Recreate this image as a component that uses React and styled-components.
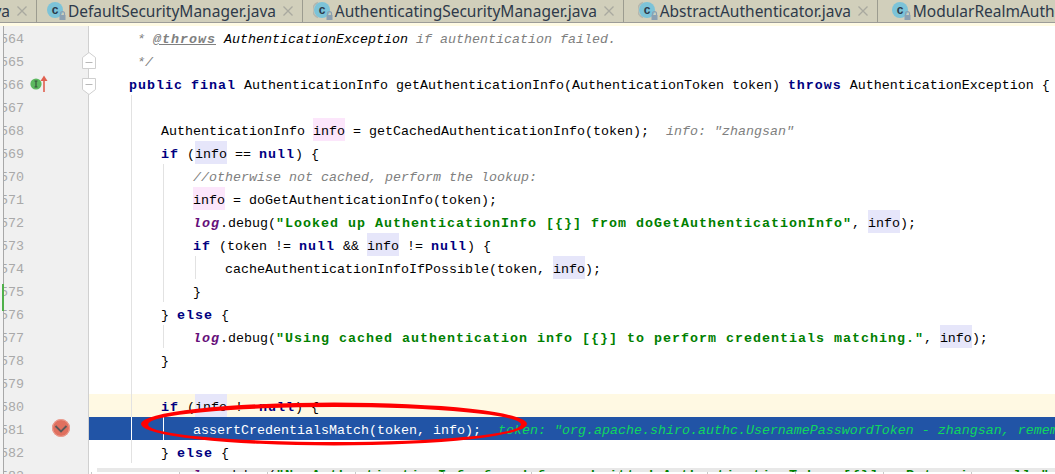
import React from 'react';
import styled, { createGlobalStyle } from 'styled-components';

const GlobalStyle = createGlobalStyle`
  html, body {
    margin: 0;
    padding: 0;
    background: #fff;
  }
  body {
    width: 1055px;
    height: 474px;
    overflow: hidden;
  }
`;

const Page = styled.div`
  position: relative;
  width: 1055px;
  height: 474px;
  overflow: hidden;
`;

/* tabs */
const TabBar = styled.div`
  display: flex;
  height: 22px;
  background: #d1cfbb;
  border-bottom: 1px solid #9c9c98;
  overflow: hidden;
`;

const Tab = styled.div`
  display: flex;
  flex-shrink: 0;
  align-items: center;
  justify-content: flex-end;
  box-sizing: border-box;
  width: ${p => p.$width}px;
  padding-right: 8px;
  border-right: 1px solid #9c9c90;
  overflow: hidden;
`;

const TabName = styled.span`
  flex-shrink: 0;
  margin: 0 6px 0 2px;
  font: 15.5px 'Noto Sans', sans-serif;
  color: #2e3a4a;
  white-space: nowrap;
`;

const NoticeStrip = styled.div`
  height: 3px;
  background: #fffbe4;
`;

/* editor body */
const Body = styled.div`
  display: grid;
  grid-template-columns: 89px 1fr;
  height: 448px;
  overflow: hidden;
  font: 13.34px/27px 'Liberation Mono', monospace;
`;

const Gutter = styled.div`
  position: relative;
  background: #f0f0f0;
  border-right: 1px solid #d0d0d0;
  box-sizing: border-box;

  &::before {
    content: '';
    position: absolute;
    z-index: 2;
    left: 0;
    top: 0;
    bottom: 0;
    width: 3px;
    background: #f4f4f4;
    border-right: 1px solid #a8a8a8;
  }
`;

const ChangeMark = styled.div`
  position: absolute;
  z-index: 3;
  left: 2px;
  top: 258px;
  width: 2px;
  height: 27px;
  background: #4fb04a;
`;

const LineNo = styled.div`
  position: relative;
  height: 23px;
  color: #a9a9a9;
`;

const GutterIcon = styled.svg`
  position: absolute;
  left: ${p => p.$left}px;
  top: ${p => p.$top}px;
`;

const FoldMark = styled.svg`
  position: absolute;
  z-index: 3;
  left: 82px;
  top: ${p => p.$top}px;
`;

const Editor = styled.div`
  display: flex;
  flex-direction: column;
  min-width: 0;
  overflow: hidden;
`;

const Row = styled.div`
  position: relative;
  flex-shrink: 0;
  height: 23px;
  padding-left: ${p => 8 + p.$indent * 8}px;
  white-space: pre;
  color: ${p => (p.$selected ? '#fff' : '#000')};
  background: ${p => (p.$selected ? '#2154a6' : p.$caret ? '#fff9e3' : 'transparent')};
`;

const Guide = styled.i`
  position: absolute;
  left: ${p => 10 + p.$level * 8}px;
  top: 0;
  bottom: 0;
  width: 1px;
  background: ${p => (p.$selected ? '#fff' : '#e2e2e2')};
`;

const Keyword = styled.b`
  color: #000080;
  letter-spacing: 1px;
`;

const Str = styled.b`
  color: #008000;
  letter-spacing: 1px;
`;

const Comment = styled.i`
  color: #808080;
`;

const DocTag = styled.b`
  font-style: italic;
  color: #808080;
  letter-spacing: 1px;
  text-decoration: underline;
`;

const DocName = styled.i`
  color: #000;
`;

const LogField = styled.b`
  font-style: italic;
  color: #660e7a;
  letter-spacing: 1px;
`;

const Usage = styled.span`
  display: inline-block;
  height: 23px;
  background: ${p => (p.$write ? '#fce6fb' : '#e6e6fa')};
`;

const Hint = styled.i`
  margin-left: 17px;
  color: ${p => (p.$selected ? '#0fd65f' : '#808080')};
`;

/* line 583 is cut by the strip of a following capture */
const CutRow = styled.div`
  flex-shrink: 0;
  height: 4px;
  margin: 5px 0 0 8px;
  padding-left: 96px;
  background: #e8e8e8;
  white-space: pre;
  overflow: hidden;
  line-height: 16px;
`;

const TickRuler = styled.div`
  flex-shrink: 0;
  height: 2px;
  background: repeating-linear-gradient(to right, #c8c8c8 0 1px, #fff 1px 88px);
  background-position: 2px 0;
`;

const CircleMark = styled.svg`
  position: absolute;
  z-index: 5;
  left: 0;
  top: 0;
  pointer-events: none;
`;

const ClassIcon = ({ ring }) => (
  <svg width="20" height="20" viewBox="0 0 20 20" style={{ flexShrink: 0 }}>
    {ring && <path d="M5 1.5A8 8 0 0 0 5 16.5" fill="none" stroke="#b4b6ae" strokeWidth="1.5" />}
    <circle cx="9" cy="9" r="8" fill="#7cc3d8" />
    <text x="9" y="13" textAnchor="middle" fontFamily="'Liberation Sans', sans-serif" fontSize="12" fontWeight="700" fill="#2b3a4c">c</text>
    <path d="M14.5 14v-1.4a2 2 0 0 1 4 0V14" fill="none" stroke="#8ba0b2" strokeWidth="1.2" />
    <rect x="13.5" y="14" width="6" height="5" fill="#8ba0b2" />
  </svg>
);

const CloseIcon = () => (
  <svg width="12" height="12" viewBox="0 0 12 12" style={{ flexShrink: 0 }}>
    <path d="M1.5 1.5l9 9M10.5 1.5l-9 9" stroke="#a9a99f" strokeWidth="1.3" />
  </svg>
);

const tabs = [
  { name: 'java', width: 37 },
  { name: 'DefaultSecurityManager.java', width: 266 },
  { name: 'AuthenticatingSecurityManager.java', width: 321, ring: true },
  { name: 'AbstractAuthenticator.java', width: 254, ring: true },
  { name: 'ModularRealmAuthenticator.java', width: 300 }
];

const lines = [
  { no: 564, indent: 5, body: <><Comment>* </Comment><DocTag>@throws</DocTag><DocName> AuthenticationException</DocName><Comment> if authentication failed.</Comment></> },
  { no: 565, indent: 5, body: <Comment>*/</Comment> },
  { no: 566, indent: 4, body: <><Keyword>public</Keyword> <Keyword>final</Keyword> AuthenticationInfo getAuthenticationInfo(AuthenticationToken token) <Keyword>throws</Keyword> AuthenticationException {'{'}</> },
  { no: 567, guides: [4] },
  { no: 568, indent: 8, guides: [4], body: <>AuthenticationInfo <Usage $write>info</Usage> = getCachedAuthenticationInfo(token);<Hint>info: "zhangsan"</Hint></> },
  { no: 569, indent: 8, guides: [4], body: <><Keyword>if</Keyword> (<Usage>info</Usage> == <Keyword>null</Keyword>) {'{'}</> },
  { no: 570, indent: 12, guides: [4, 8], body: <Comment>//otherwise not cached, perform the lookup:</Comment> },
  { no: 571, indent: 12, guides: [4, 8], body: <><Usage $write>info</Usage> = doGetAuthenticationInfo(token);</> },
  { no: 572, indent: 12, guides: [4, 8], body: <><LogField>log</LogField>.debug(<Str>"Looked up AuthenticationInfo [{'{}'}] from doGetAuthenticationInfo"</Str>, <Usage>info</Usage>);</> },
  { no: 573, indent: 12, guides: [4, 8], body: <><Keyword>if</Keyword> (token != <Keyword>null</Keyword> &amp;&amp; <Usage>info</Usage> != <Keyword>null</Keyword>) {'{'}</> },
  { no: 574, indent: 16, guides: [4, 8, 12], body: <>cacheAuthenticationInfoIfPossible(token, <Usage>info</Usage>);</> },
  { no: 575, indent: 12, guides: [4, 8], body: '}' },
  { no: 576, indent: 8, guides: [4], body: <>{'} '}<Keyword>else</Keyword> {'{'}</> },
  { no: 577, indent: 12, guides: [4, 8], body: <><LogField>log</LogField>.debug(<Str>"Using cached authentication info [{'{}'}] to perform credentials matching."</Str>, <Usage>info</Usage>);</> },
  { no: 578, indent: 8, guides: [4], body: '}' },
  { no: 579, guides: [4] },
  { no: 580, indent: 8, guides: [4], caret: true, body: <><Keyword>if</Keyword> (<Usage>info</Usage> != <Keyword>null</Keyword>) {'{'}</> },
  { no: 581, indent: 12, guides: [4, 8], selected: true, body: <>assertCredentialsMatch(token, info);<Hint $selected>token: "org.apache.shiro.authc.UsernamePasswordToken - zhangsan, rememberMe=false"</Hint></> },
  { no: 582, indent: 8, guides: [4], body: <>{'} '}<Keyword>else</Keyword> {'{'}</> }
];

const App = () => (
  <Page>
    <GlobalStyle />
    <TabBar>
      {tabs.map((tab, i) => (
        <Tab key={tab.name} $width={tab.width}>
          {i > 0 && <ClassIcon ring={tab.ring} />}
          <TabName>{tab.name}</TabName>
          <CloseIcon />
        </Tab>
      ))}
    </TabBar>
    <NoticeStrip />
    <Body>
      <Gutter>
        {lines.map(line => <LineNo key={line.no}>{line.no}</LineNo>)}
        <LineNo>583</LineNo>
        <ChangeMark />
        <FoldMark $top={26} width="14" height="17" viewBox="0 0 14 17">
          <path d="M7 .5L13.5 5.5V16.5H.5V5.5Z" fill="#fff" stroke="#cfcfcf" />
          <path d="M3.5 10.5h7" stroke="#b8b8b8" />
        </FoldMark>
        <FoldMark $top={52} width="14" height="17" viewBox="0 0 14 17">
          <path d="M.5.5H13.5V11.5L7 16.5L.5 11.5Z" fill="#fff" stroke="#cfcfcf" />
          <path d="M3.5 6.5h7" stroke="#b8b8b8" />
        </FoldMark>
        <GutterIcon $left={29} $top={48} width="20" height="20" viewBox="0 0 20 20">
          <circle cx="7" cy="10" r="5.6" fill="#5cb85f" />
          <path d="M5.5 7h3M5.5 13h3M7 7v6" stroke="#35553a" strokeWidth="1.2" fill="none" />
          <path d="M15 18V4" stroke="#e0604f" strokeWidth="1.6" />
          <path d="M11.5 7L15 1.5L18.5 7Z" fill="#e0604f" />
        </GutterIcon>
        <GutterIcon $left={51} $top={392} width="20" height="20" viewBox="0 0 20 20">
          <circle cx="10" cy="10" r="9" fill="#e0705f" />
          <circle cx="10" cy="10" r="8.4" fill="none" stroke="#eea598" strokeWidth="1" />
          <path d="M4.5 8l5.5 5.5L15.5 8" fill="none" stroke="#5a5a5a" strokeWidth="1.8" />
        </GutterIcon>
      </Gutter>
      <Editor>
        {lines.map(line => (
          <Row key={line.no} $indent={line.indent || 0} $selected={line.selected} $caret={line.caret}>
            {(line.guides || []).map(level => <Guide key={level} $level={level} $selected={line.selected} />)}
            {line.body}
          </Row>
        ))}
        <CutRow>
          <LogField>log</LogField>.debug(<Str>"No AuthenticationInfo found for submitted AuthenticationToken [{'{}'}].  Returning null."</Str>, token);
        </CutRow>
        <TickRuler />
      </Editor>
    </Body>
    {/* hand drawn ring: thicker along the top and at the tips */}
    <CircleMark width="1055" height="474" viewBox="0 0 1055 474">
      <path
        fillRule="evenodd"
        fill="#ff0000"
        d="M141 424a193 21.5 0 1 0 386 0a193 21.5 0 1 0 -386 0ZM148 424.5a186.5 17.5 0 1 0 373 0a186.5 17.5 0 1 0 -373 0Z"
      />
    </CircleMark>
  </Page>
);

export default App;
